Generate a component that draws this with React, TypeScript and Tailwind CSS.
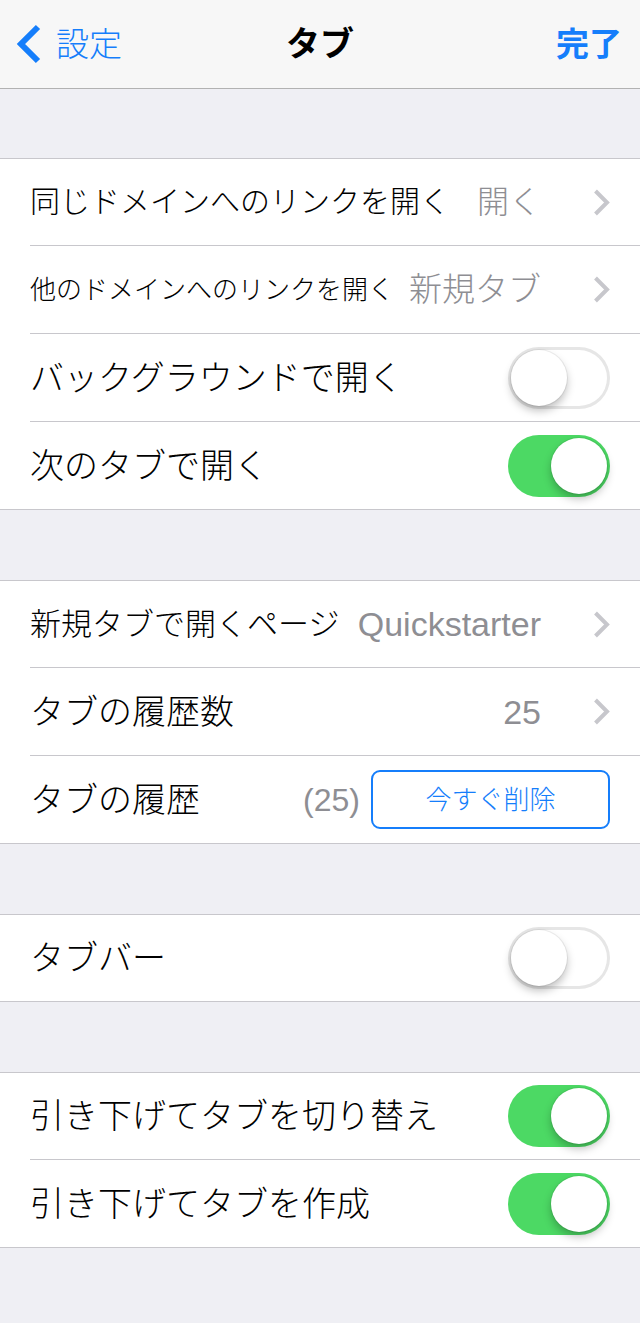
import React from "react";

const FONT = "font-['Liberation_Sans','Noto_Sans_CJK_JP',sans-serif]";

function Chevron() {
  return (
    <svg width="17" height="27" viewBox="0 0 17 27" className="shrink-0">
      <path d="M2.5 2 L14 13.5 L2.5 25" fill="none" stroke="#c7c7cc" strokeWidth="4" strokeLinecap="butt" strokeLinejoin="miter" />
    </svg>
  );
}

function Toggle({ on }: { on: boolean }) {
  return (
    <div
      className={
        "w-[102px] h-[62px] rounded-full flex items-center p-[3px] shrink-0 " +
        (on
          ? "bg-[#4cd964] justify-end"
          : "bg-white justify-start shadow-[inset_0_0_0_3px_#e6e6e6]")
      }
    >
      <div className="w-[56px] h-[56px] rounded-full bg-white shadow-[0_5px_8px_rgba(0,0,0,0.25),0_0_0_1px_rgba(0,0,0,0.06)]" />
    </div>
  );
}

function Sep() {
  return <div className="ml-[30px] h-px bg-[#c8c7cc]" />;
}

function Row({
  first,
  children,
}: {
  first?: boolean;
  children: React.ReactNode;
}) {
  return (
    <div
      className={
        "flex items-center pl-[30px] pr-[30px] " + (first ? "h-[86px]" : "h-[87px]")
      }
    >
      {children}
    </div>
  );
}

function Group({ children }: { children: React.ReactNode }) {
  return <div className="bg-white border-y border-[#c8c7cc]">{children}</div>;
}

export default function App() {
  return (
    <div className={"w-[640px] min-h-[1323px] bg-[#efeff4] text-black " + FONT}>
      {/* Nav bar */}
      <div className="relative h-[89px] bg-[#f7f7f7] border-b border-[#b2b2b2] flex items-center">
        <div className="flex items-center pl-[16px] gap-[14px] text-[#157efb]">
          <svg width="26" height="42" viewBox="0 0 26 42">
            <path d="M22 4 L5 21 L22 38" fill="none" stroke="#157efb" strokeWidth="6" strokeLinecap="butt" strokeLinejoin="miter" />
          </svg>
          <span className="text-[33px] leading-none font-light">設定</span>
        </div>
        <div className="absolute left-0 right-0 top-0 h-[88px] flex items-center justify-center pointer-events-none">
          <span className="text-[34px] leading-none font-bold">タブ</span>
        </div>
        <span className="ml-auto pr-[18px] text-[33px] leading-none font-bold text-[#157efb]">完了</span>
      </div>

      <div className="h-[69px]" />

      <Group>
        <Row first>
          <span className="text-[30px] leading-none font-light whitespace-nowrap">同じドメインへのリンクを開く</span>
          <span className="ml-auto text-[32px] leading-none font-light text-[#8e8e93] whitespace-nowrap">開く</span>
          <span className="ml-[52px]"><Chevron /></span>
        </Row>
        <Sep />
        <Row>
          <span className="text-[26px] leading-none font-light whitespace-nowrap">他のドメインへのリンクを開く</span>
          <span className="ml-auto text-[33px] leading-none font-light text-[#8e8e93] whitespace-nowrap">新規タブ</span>
          <span className="ml-[52px]"><Chevron /></span>
        </Row>
        <Sep />
        <Row>
          <span className="text-[34px] leading-none font-light whitespace-nowrap">バックグラウンドで開く</span>
          <span className="ml-auto"><Toggle on={false} /></span>
        </Row>
        <Sep />
        <Row>
          <span className="text-[34px] leading-none font-light whitespace-nowrap">次のタブで開く</span>
          <span className="ml-auto"><Toggle on={true} /></span>
        </Row>
      </Group>

      <div className="h-[70px]" />

      <Group>
        <Row first>
          <span className="text-[31px] leading-none font-light whitespace-nowrap">新規タブで開くページ</span>
          <span className="ml-auto text-[34px] leading-none text-[#8e8e93] whitespace-nowrap">Quickstarter</span>
          <span className="ml-[52px]"><Chevron /></span>
        </Row>
        <Sep />
        <Row>
          <span className="text-[34px] leading-none font-light whitespace-nowrap">タブの履歴数</span>
          <span className="ml-auto text-[34px] leading-none text-[#8e8e93]">25</span>
          <span className="ml-[52px]"><Chevron /></span>
        </Row>
        <Sep />
        <Row>
          <span className="text-[34px] leading-none font-light whitespace-nowrap">タブの履歴</span>
          <span className="ml-auto text-[32px] leading-none text-[#8e8e93]">(25)</span>
          <button className="ml-[11px] w-[239px] h-[59px] rounded-[9px] border-2 border-[#157efb] flex items-center justify-center text-[#157efb] text-[26px] leading-none font-light">
            今すぐ削除
          </button>
        </Row>
      </Group>

      <div className="h-[70px]" />

      <Group>
        <Row first>
          <span className="text-[34px] leading-none font-light whitespace-nowrap">タブバー</span>
          <span className="ml-auto"><Toggle on={false} /></span>
        </Row>
      </Group>

      <div className="h-[70px]" />

      <Group>
        <Row first>
          <span className="text-[34px] leading-none font-light whitespace-nowrap">引き下げてタブを切り替え</span>
          <span className="ml-auto"><Toggle on={true} /></span>
        </Row>
        <Sep />
        <Row>
          <span className="text-[34px] leading-none font-light whitespace-nowrap">引き下げてタブを作成</span>
          <span className="ml-auto"><Toggle on={true} /></span>
        </Row>
      </Group>
    </div>
  );
}
